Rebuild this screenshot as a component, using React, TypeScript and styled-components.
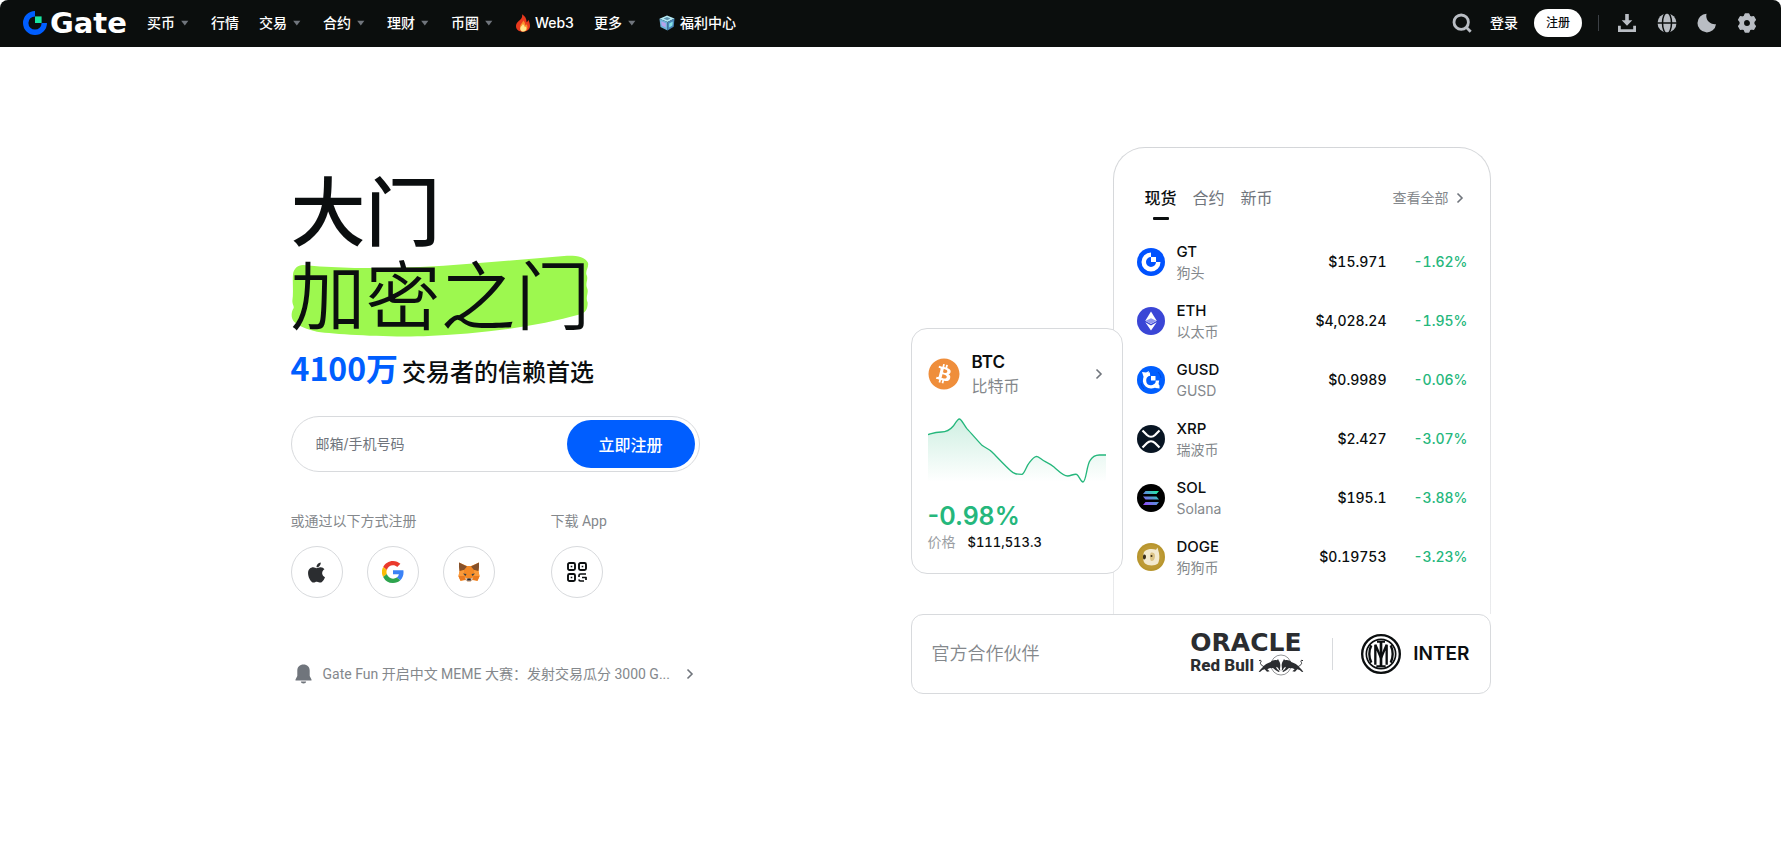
import React from 'react';
import styled, { createGlobalStyle } from 'styled-components';
import { FaApple, FaBitcoin } from 'react-icons/fa';

const Global = createGlobalStyle`
  *, *::before, *::after { box-sizing: border-box; }
  body { margin: 0; background: #fff; color: #0b0e0f; font-family: Inter, "Noto Sans CJK SC", sans-serif; }
  button, input { font: inherit; color: inherit; }
  button { border: 0; background: none; padding: 0; cursor: pointer; }
  a { color: inherit; text-decoration: none; }
  h1, h2, p { margin: 0; padding: 0; }
  svg { display: block; flex: none; }
`;

/* ---------- header ---------- */
const Header = styled.header`
  display: flex;
  align-items: center;
  justify-content: space-between;
  height: 47px;
  padding: 0 22px 1px;
  background: #0b0e0d;
  border-radius: 8px 8px 0 0;
  color: #fff;
  font-size: 14px;
  font-weight: 500;
  line-height: 20px;
`;
const Group = styled.div<{ $gap: number }>`
  display: flex;
  align-items: center;
  gap: ${p => p.$gap}px;
`;
const Logo = styled.a`
  display: flex;
  align-items: center;
  gap: 2px;
  font-family: "DejaVu Sans", sans-serif;
  font-size: 29px;
  font-weight: 700;
  line-height: 32px;
`;
const Nav = styled.nav`
  display: flex;
  align-items: center;
  gap: 20px;
`;
const NavLink = styled.a`
  display: flex;
  align-items: center;
  gap: 4px;
  white-space: nowrap;
`;
const SignUp = styled.button`
  width: 48px;
  height: 28px;
  border-radius: 14px;
  background: #fff;
  color: #0b0e0f;
  font-size: 12px;
  font-weight: 500;
`;
const Rule = styled.span<{ $h: number; $color: string }>`
  width: 1px;
  height: ${p => p.$h}px;
  background: ${p => p.$color};
`;
const IconButton = styled.button`
  display: grid;
  place-items: center;
  width: 24px;
  height: 24px;
  color: #b9bdc3;
`;

/* ---------- hero ---------- */
const Hero = styled.main`
  display: flex;
  justify-content: space-between;
  align-items: flex-start;
  max-width: 1200px;
  margin: 0 auto;
  padding: 100px 0 64px;
`;
const Intro = styled.section`
  width: 409px;
  padding-top: 24px;
`;
const Title = styled.h1`
  font-size: 75px;
  line-height: 84px;
  font-weight: 500;
  white-space: nowrap;
`;
const Marked = styled.span`
  display: block;
  position: relative;
  width: max-content;
  font-weight: 350;
  z-index: 0;
`;
const Marker = styled.svg`
  position: absolute;
  left: 0;
  top: 0;
  z-index: -1;
`;
const Tagline = styled.p`
  display: flex;
  align-items: baseline;
  gap: 4px;
  margin-top: 10px;
  font-size: 24px;
  line-height: 36px;
  font-weight: 500;
  white-space: nowrap;
`;
const Count = styled.strong`
  color: #005eff;
  font-size: 32px;
  font-weight: 700;
  font-family: "Noto Sans CJK SC", sans-serif;
`;
const SignForm = styled.form`
  display: flex;
  align-items: center;
  height: 56px;
  margin-top: 25px;
  padding: 0 4px 0 24px;
  border: 1px solid #d8dadd;
  border-radius: 28px;
`;
const Account = styled.input`
  flex: 1;
  min-width: 0;
  border: 0;
  outline: 0;
  padding: 0;
  background: none;
  font-size: 14px;
  line-height: 20px;
  &::placeholder { color: #70757c; opacity: 1; }
`;
const Submit = styled.button`
  width: 128px;
  height: 48px;
  border-radius: 24px;
  background: #005eff;
  color: #fff;
  font-size: 16px;
  font-weight: 500;
`;
const Ways = styled.div`
  display: flex;
  gap: 56px;
  margin-top: 39px;
`;
const WayLabel = styled.p`
  font-family: Roboto, "Noto Sans CJK SC", sans-serif;
  font-size: 14px;
  line-height: 20px;
  color: #84888c;
  margin-bottom: 15px;
`;
const Round = styled.button`
  display: grid;
  place-items: center;
  width: 52px;
  height: 52px;
  border: 1px solid #d8dadd;
  border-radius: 50%;
`;
const News = styled.a`
  display: flex;
  align-items: center;
  justify-content: space-between;
  margin-top: 64px;
  padding: 0 3px 0 4px;
  color: #70757c;
`;
const NewsText = styled.span`
  font-family: Roboto, "Noto Sans CJK SC", sans-serif;
  font-size: 14px;
  line-height: 24px;
  white-space: nowrap;
  color: #84888c;
`;

/* ---------- market ---------- */
const Market = styled.section`
  width: 580px;
`;
const Boards = styled.div`
  display: grid;
  grid-template-columns: 202px 1fr;
`;
const BtcCard = styled.a`
  position: relative;
  z-index: 1;
  align-self: end;
  width: 212px;
  height: 246px;
  margin-bottom: 40px;
  padding: 21px 16px 0;
  border: 1px solid #d8dadd;
  border-radius: 16px;
  background: #fff;
`;
const BtcHead = styled.div`
  display: flex;
  align-items: center;
  gap: 12px;
`;
const BtcNames = styled.div`
  flex: 1;
  font-size: 16px;
  line-height: 24px;
  color: #84888c;
  strong { display: block; color: #0b0e0f; font-size: 17px; font-weight: 600; }
`;
const Chart = styled.svg`
  width: 100%;
  height: auto;
  margin-top: 18px;
`;
const Change = styled.p`
  margin-top: 17px;
  font-size: 25px;
  line-height: 32px;
  font-weight: 600;
  color: #25b77c;
`;
const Price = styled.p`
  display: flex;
  gap: 12px;
  font-size: 14px;
  line-height: 20px;
  color: #9a9ea3;
  b { color: #0b0e0f; font-size: 13px; font-weight: 500; font-variant-numeric: tabular-nums; }
`;
const Panel = styled.div`
  height: 467px;
  padding: 38px 22px 0 23px;
  border: 1px solid transparent;
  border-bottom: 0;
  border-radius: 32px 32px 0 0;
  background:
    linear-gradient(#fff, #fff) padding-box,
    linear-gradient(#d4d6d9, #eaebed) border-box;
`;
const PanelHead = styled.div`
  display: flex;
  justify-content: space-between;
  align-items: flex-start;
  padding: 0 1px 0 8px;
`;
const Tab = styled.button<{ $on?: boolean }>`
  display: flex;
  flex-direction: column;
  align-items: center;
  gap: 7px;
  font-size: 16px;
  line-height: 24px;
  font-weight: ${p => (p.$on ? 500 : 400)};
  color: ${p => (p.$on ? '#0b0e0f' : '#70757c')};
  &::after {
    content: "";
    width: 16px;
    height: 3px;
    border-radius: 1px;
    background: ${p => (p.$on ? '#0b0e0f' : 'transparent')};
  }
`;
const More = styled.a`
  display: flex;
  align-items: center;
  gap: 4px;
  font-size: 14px;
  line-height: 24px;
  color: #84888c;
`;
const Table = styled.table`
  width: 100%;
  margin-top: 12px;
  border-collapse: collapse;
  td { height: 59px; padding: 0; text-align: right; font-size: 14px; font-weight: 500; font-variant-numeric: tabular-nums; }
`;
const Coin = styled.span`
  display: flex;
  align-items: center;
  gap: 12px;
  text-align: left;
`;
const CoinNames = styled.span`
  font-size: 14px;
  line-height: 21px;
  font-weight: 400;
  color: #84888c;
  b { display: block; color: #0b0e0f; font-size: 15px; font-weight: 500; }
`;
const Rate = styled.span`
  display: block;
  width: 81px;
  margin-left: auto;
  color: #25b77c;
`;
const Partners = styled.div`
  display: flex;
  align-items: center;
  height: 80px;
  padding: 0 20px;
  border: 1px solid #d8dadd;
  border-radius: 12px;
  background: #fff;
`;
const PartnerLabel = styled.h2`
  flex: 1;
  font-size: 18px;
  line-height: 28px;
  font-weight: 350;
  color: #84888c;
`;
const RacingLogo = styled.div`
  width: 114px;
  color: #2b2d30;
  margin-right: 28px;
`;
const Oracle = styled.div`
  font-family: "DejaVu Sans", sans-serif;
  font-size: 25px;
  font-weight: 700;
  line-height: 22px;
`;
const RedBull = styled.div`
  display: flex;
  align-items: center;
  justify-content: space-between;
  font-family: Roboto, sans-serif;
  font-size: 17px;
  line-height: 20px;
  font-weight: 800;
  white-space: nowrap;
`;
const InterLogo = styled.div`
  display: flex;
  align-items: center;
  gap: 12px;
  margin-left: 28px;
  font-size: 19px;
  line-height: 28px;
  font-weight: 600;
`;

/* ---------- drawings ---------- */
const Caret = () => (
  <svg width="12" height="12" viewBox="0 0 12 12"><path d="M2.2 3.7h7.2L5.8 8.4z" fill="#70757c" /></svg>
);
const Chevron = ({ color = '#70757c' }: { color?: string }) => (
  <svg width="14" height="14" viewBox="0 0 14 14" fill="none" stroke={color} strokeWidth="1.6">
    <path d="M4.5 2.5 9 7l-4.5 4.5" />
  </svg>
);
const GateMark = () => (
  <svg width="26" height="26" viewBox="0 0 26 26">
    <path d="M13 1a12 12 0 1 0 12 12h-5.400a6.600 6.600 0 1 1-6.600-6.600z" fill="#005eff" />
    <path d="M13 6.400h6.600V13H13z" fill="#17e6a1" />
  </svg>
);
const Flame = () => (
  <svg width="16" height="18" viewBox="0 0 16 18">
    <path d="M7 .3c.6 2.500-.2 3.800-1.600 5.300C3.700 7.300 1 9 1 12.200 1 15.500 4 17.700 8 17.700s7-2.300 7-5.700c0-2.600-1-4.600-1.700-6.200-.3 1.300-.8 2-1.700 2.500C11.700 5 10 1.800 7 .3z" fill="#e8391d" />
    <path d="M8 6.500c.3 1.800-2.800 3.300-2.800 6.500 0 2.500 1.500 4.500 3.300 4.500s4-1.600 4-4.300c0-1.500-.6-2.300-1-2.900-.3.700-.7 1-1.200 1.200C10.300 9.500 9.700 7.600 8 6.500z" fill="#f9902b" />
    <path d="M7.800 10c.1 1.200-2.600 2.300-2.600 4.700 0 1.700 1.300 2.900 3 2.900s3.200-1.100 3.200-3c0-.9-.4-1.600-.7-2-.3.500-.6.600-.9.700-.2-1.300-.8-2.500-2-3.300z" fill="#ffe58a" />
  </svg>
);
const Cube = () => (
  <svg width="18" height="16" viewBox="0 0 18 16">
    <path d="m9 .5 7.500 3L9.500 7 1.500 3.700z" fill="#b7ecf6" />
    <path d="M1.500 3.700l8 3.300v8.500L2.500 12z" fill="#6fb4da" />
    <path d="m9.500 7 7-3.500-.8 8.300-6.200 3.700z" fill="#4a86b8" />
    <path d="m5.500 3.600 3.500-1.500 3.500 1.300-3.300 1.800z" fill="#5f93ae" />
    <path d="M3.200 6.300 7.800 8.300v4.200l-4-2z" fill="#b8a3ec" />
    <path d="m11.200 8.600 3.600-2-.4 3.900-3.200 2z" fill="#86e3e8" />
  </svg>
);
const SearchIcon = () => (
  <svg width="20" height="20" viewBox="0 0 20 20" fill="none" stroke="currentColor" strokeWidth="2.800">
    <circle cx="9.200" cy="9.200" r="7.200" /><path d="m14 14 4.700 4.700" />
  </svg>
);
const DownloadIcon = () => (
  <svg width="20" height="20" viewBox="0 0 20 20" fill="currentColor">
    <path d="M8.200 1h3.600v6.200h3.500L10 12.800 4.700 7.200h3.500z" />
    <path d="M1 12.800h2.800v3.400h12.400v-3.400H19V19H1z" />
  </svg>
);
const GlobeIcon = () => (
  <svg width="20" height="20" viewBox="0 0 20 20">
    <circle cx="10" cy="10" r="9.500" fill="currentColor" />
    <g fill="none" stroke="#0b0e0d" strokeWidth="1.500">
      <path d="M0 10h20" /><ellipse cx="10" cy="10" rx="4.500" ry="10.500" />
    </g>
  </svg>
);
const MoonIcon = () => (
  <svg width="20" height="20" viewBox="0 0 20 20">
    <path d="M9.500.8A8.500 8.500 0 0 0 19 11.200 9.300 9.300 0 1 1 9.500.8z" fill="currentColor" />
  </svg>
);
const GearIcon = () => (
  <svg width="20" height="20" viewBox="0 0 20 20">
    <path fillRule="evenodd" fill="currentColor" stroke="currentColor" strokeWidth="1.500" strokeLinejoin="round"
      d="M8.300 1h3.400l.9 2.300 1.500.9 2.500-.4 1.700 3-1.600 1.900v2.600l1.600 1.900-1.700 3-2.500-.4-1.500.9-.9 2.300H8.300l-.9-2.300-1.500-.9-2.500.4-1.700-3 1.600-1.900V8.700L1.700 6.800l1.700-3 2.500.4 1.500-.9zM10 6.300a3.700 3.700 0 1 0 0 7.400 3.700 3.700 0 0 0 0-7.400z" />
  </svg>
);
const BellIcon = () => (
  <svg width="17" height="20" viewBox="0 0 17 20" fill="currentColor">
    <path d="M8.500.5C4.800.5 2.300 3 2.300 6.500v5.500L.5 15.500v1h16v-1L14.700 12V6.500c0-3.500-2.500-6-6.200-6z" />
    <path d="M5.800 17.600h5.400a2.700 2 0 0 1-5.400 0z" />
  </svg>
);
const GoogleIcon = () => (
  <svg width="22" height="22" viewBox="0 0 48 48">
    <path fill="#ea3a2c" d="M24 9.500c3.500 0 6.700 1.200 9.200 3.600l6.900-6.900C35.900 2.400 30.500 0 24 0 14.600 0 6.500 5.400 2.600 13.200l8 6.200C12.400 13.700 17.700 9.500 24 9.500z" />
    <path fill="#3b82f6" d="M47 24.600c0-1.600-.2-3.100-.4-4.600H24v9h12.900a11 11 0 0 1-4.800 7.200l7.700 6c4.500-4.200 7.200-10.400 7.200-17.600z" />
    <path fill="#fbbc05" d="M10.500 28.600a14.500 14.500 0 0 1 0-9.200l-8-6.200a24 24 0 0 0 0 21.600z" />
    <path fill="#2da44e" d="M24 48c6.500 0 11.900-2.100 15.900-5.800l-7.700-6A14.400 14.400 0 0 1 24 38.500c-6.300 0-11.600-4.200-13.500-9.900l-8 6.200A24 24 0 0 0 24 48z" />
  </svg>
);
const FoxIcon = () => (
  <svg width="22" height="20" viewBox="0 0 44 40">
    <path d="M2 1 18 8h8L42 1l-1 16 2 12-4 9-10-2-4 3h-6l-4-3-10 2-4-9 2-12z" fill="#f58a26" />
    <path d="M2 1 18 9l-6 7-9 2-1-8zM42 1 26 9l6 7 9 2 1-8z" fill="#85512b" />
    <path d="M12 16 3 19l-2 9h11zM32 16l9 3 2 9H32z" fill="#fb9a3a" />
    <path d="m5 37 10-2-3-7H1zM39 37l-10-2 3-7h11z" fill="#e97a20" />
    <path d="m10 23 7 1-2 4zM34 23l-7 1 2 4z" fill="#35424d" />
    <path d="m14 31 5 2h6l5-2-2 6-4 2.500h-4L16 37z" fill="#d5bfb2" />
    <path d="M19 33h6l1 4h-8z" fill="#1c242c" />
  </svg>
);
const QrIcon = () => (
  <svg width="20" height="20" viewBox="0 0 20 20" fill="none" stroke="#0b0e0f" strokeWidth="1.900">
    <rect x="1" y="1" width="7" height="7" rx="1.500" /><rect x="12" y="1" width="7" height="7" rx="1.500" />
    <rect x="1" y="12" width="7" height="7" rx="1.500" />
    <path d="M19 12h-5.500a1.500 1.500 0 0 0-1.500 1.500V15M12 17.500a1.500 1.500 0 0 0 1.500 1.500H17M15 15.500h4.500M19 15v3" strokeWidth="1.700" />
    <path d="M3.700 4.500h1.600M14.700 4.500h1.600M3.700 15.500h1.600" strokeWidth="1.600" />
  </svg>
);
const Bulls = () => (
  <svg width="46" height="22" viewBox="0 0 138 66">
    <circle cx="69" cy="33" r="30" fill="none" stroke="currentColor" strokeWidth="1.500" />
    {[undefined, 'matrix(-1 0 0 1 138 0)'].map((t, i) => (
      <g key={i} transform={t}>
        <path fill="none" stroke="currentColor" strokeWidth="3" d="M3 20c6-3 8 1 5 5-3 5 3 9 10 13" />
        <path fill="currentColor"
          d="M14 40c6-8 14-13 24-16 5-5 12-7 19-5l3-4 3 6c3 4 4 9 4 14l-1 9 1 6-4-3-3-6-6-3 3 7 8 7-3 2-10-6-7-6-11 1-6 3 7 6-8 1-7-7-7 2-7 6-4-1 6-7z" />
      </g>
    ))}
  </svg>
);
const InterCrest = () => (
  <svg width="40" height="40" viewBox="0 0 120 120" fill="none" stroke="#0b0e0f">
    <circle cx="60" cy="60" r="56.500" strokeWidth="7" />
    <circle cx="60" cy="60" r="44" strokeWidth="5" />
    <path strokeWidth="8" d="M60 22v76" />
    <path strokeWidth="6" d="M48 23h24M46 97h28" />
    <path strokeWidth="7" d="M43 92V32l17 40 17-40v60" strokeLinejoin="bevel" />
    <path strokeWidth="7" d="M31 34c-8 15-8 37 0 52M89 34c8 15 8 37 0 52" />
  </svg>
);

const Disc = ({ fill, children }: { fill: string; children: React.ReactNode }) => (
  <svg width="28" height="28" viewBox="0 0 28 28"><circle cx="14" cy="14" r="14" fill={fill} />{children}</svg>
);
const coinIcons: Record<string, React.ReactNode> = {
  GT: (
    <Disc fill="#0052ff">
      <path d="M14 4.500a9.500 9.500 0 1 0 9.500 9.500H19a5 5 0 1 1-5-5z" fill="#fff" /><path d="M14 9h5v5h-5z" fill="#fff" />
    </Disc>
  ),
  ETH: (
    <Disc fill="#3a46d6">
      <path d="m14 4.500 5.700 9.300L14 17.100l-5.700-3.300z" fill="#fff" />
      <path d="m8.300 15.200 5.700 3.300 5.700-3.300L14 23.500z" fill="#fff" />
      <path d="m8.600 13.700 5.400-2.500 5.400 2.500L14 16.800z" fill="#8f97ee" />
    </Disc>
  ),
  GUSD: (
    <Disc fill="#005eff">
      <path d="M13 8a6.500 6.500 0 1 0 7.500 6.500" fill="none" stroke="#fff" strokeWidth="3.400" />
      <path d="M14 10h4.500v4.500H14z" fill="#fff" />
      <path d="m5 6 4 .5L12 5l-1 5-4 2zM22.500 22.500l-4-.5-2.500-3 4-3 2.500 3.500z" fill="#fff" />
      <path d="M21 6a10 10 0 0 1 3 6M7 23a10 10 0 0 1-3-6" stroke="#0047d6" fill="none" />
    </Disc>
  ),
  XRP: (
    <Disc fill="#081523">
      <path d="M5.500 5.500 10 10c2.300 2.200 5.700 2.200 8 0l4.500-4.500M5.500 22.500 10 18c2.300-2.200 5.700-2.200 8 0l4.500 4.500" fill="none" stroke="#fff" strokeWidth="2.200" />
    </Disc>
  ),
  SOL: (
    <Disc fill="#000">
      <defs>
        <linearGradient id="sol" x1="0" y1="1" x2="1" y2="0">
          <stop offset="0" stopColor="#9945ff" /><stop offset=".5" stopColor="#5b8fd8" /><stop offset="1" stopColor="#19fb9b" />
        </linearGradient>
      </defs>
      <path fill="url(#sol)" d="M8.500 7H22l-2.500 3H6zM6 12.500h13.500l2.500 3H8.500zM8.500 18H22l-2.500 3H6z" />
    </Disc>
  ),
  DOGE: (
    <Disc fill="#b8962e">
      <circle cx="14" cy="14" r="12" fill="#bd9a35" />
      <path d="M7 9c1-1 2-2 4-2.500 3-.8 6-.5 8 .3l1.500-2.300L22 10c.8 4 .3 8-1 10.500-3 2.500-10 2.500-13 0-2-2-2.500-7-1-11.500z" fill="#f3ead0" />
      <path d="M14 9.500c2-.5 4 .5 4 3.500s-1.500 5-3.500 5S12.500 10.500 14 9.500z" fill="#dcc486" />
      <path d="M6.500 12c1-1 2.500 0 2.500 1.800s-1 2.700-2 2.700-1.500-3-.5-4.500z" fill="#3a2f1d" />
      <circle cx="14.500" cy="13" r="1" fill="#3a2f1d" />
    </Disc>
  ),
};

const nav: { label: string; caret?: boolean; icon?: React.ReactNode }[] = [
  { label: '买币', caret: true },
  { label: '行情' },
  { label: '交易', caret: true },
  { label: '合约', caret: true },
  { label: '理财', caret: true },
  { label: '币圈', caret: true },
  { label: 'Web3', icon: <Flame /> },
  { label: '更多', caret: true },
  { label: '福利中心', icon: <Cube /> },
];
const coins = [
  ['GT', '狗头', '$15.971', '-1.62%'],
  ['ETH', '以太币', '$4,028.24', '-1.95%'],
  ['GUSD', 'GUSD', '$0.9989', '-0.06%'],
  ['XRP', '瑞波币', '$2.427', '-3.07%'],
  ['SOL', 'Solana', '$195.1', '-3.88%'],
  ['DOGE', '狗狗币', '$0.19753', '-3.23%'],
];
const line =
  'M84 344C100 339 106 336 124 336C142 336 150 330 160 318C168 306 173 297 178 297C184 297 190 312 200 325C214 340 232 361 246 376C256 384 266 386 276 396C292 412 318 440 332 452C342 462 350 463 366 463C374 460 378 440 388 428C396 417 402 409 410 409C418 410 424 419 436 425C448 431 454 435 462 441C476 453 490 468 503 468C514 467 522 461 530 463C538 468 542 486 549 486C558 486 560 436 570 422C578 408 586 405 598 405L618 405';

export default function App() {
  return (
    <>
      <Global />
      <Header>
        <Group $gap={20}>
          <Logo href="#"><GateMark />Gate</Logo>
          <Nav>
            {nav.map(n => (
              <NavLink href="#" key={n.label}>{n.icon}{n.label}{n.caret && <Caret />}</NavLink>
            ))}
          </Nav>
        </Group>
        <Group $gap={16}>
          <IconButton aria-label="搜索"><SearchIcon /></IconButton>
          <NavLink href="#">登录</NavLink>
          <SignUp>注册</SignUp>
          <Rule $h={16} $color="#3c4045" />
          <IconButton aria-label="下载"><DownloadIcon /></IconButton>
          <IconButton aria-label="语言"><GlobeIcon /></IconButton>
          <IconButton aria-label="主题"><MoonIcon /></IconButton>
          <IconButton aria-label="设置"><GearIcon /></IconButton>
        </Group>
      </Header>

      <Hero>
        <Intro>
          <Title>
            大门
            <Marked>
              <Marker width="298" height="82" viewBox="32 287 894 246" aria-hidden="true">
                <path fill="#9df84f" d="M38 345C40 328 52 317 68 317C180 328 300 328 420 323C580 315 720 300 860 289C890 288 915 293 923 310C926 325 916 330 918 345C926 360 914 370 920 385C927 400 914 412 922 430C922 450 915 460 900 465C760 505 600 523 430 531C310 533 170 525 110 517C80 510 55 500 42 488C32 478 32 462 38 450C44 442 36 438 36 425C40 400 36 370 38 345Z" />
              </Marker>
              加密之门
            </Marked>
          </Title>
          <Tagline><Count>4100万</Count>交易者的信赖首选</Tagline>
          <SignForm>
            <Account aria-label="邮箱/手机号码" placeholder="邮箱/手机号码" />
            <Submit type="button">立即注册</Submit>
          </SignForm>
          <Ways>
            <div>
              <WayLabel>或通过以下方式注册</WayLabel>
              <Group $gap={24}>
                <Round aria-label="Apple"><FaApple size={23} color="#2b2d30" /></Round>
                <Round aria-label="Google"><GoogleIcon /></Round>
                <Round aria-label="MetaMask"><FoxIcon /></Round>
              </Group>
            </div>
            <div>
              <WayLabel>下载 App</WayLabel>
              <Round aria-label="App"><QrIcon /></Round>
            </div>
          </Ways>
          <News href="#">
            <Group $gap={11}>
              <BellIcon />
              <NewsText>Gate Fun 开启中文 MEME 大赛：发射交易瓜分 3000 G...</NewsText>
            </Group>
            <Chevron />
          </News>
        </Intro>

        <Market>
          <Boards>
            <BtcCard href="#">
              <BtcHead>
                <FaBitcoin size={32} color="#ef8e3b" />
                <BtcNames><strong>BTC</strong>比特币</BtcNames>
                <Chevron />
              </BtcHead>
              <Chart viewBox="84 288 534 201">
                <defs>
                  <linearGradient id="area" x1="0" y1="0" x2="0" y2="1">
                    <stop offset="0" stopColor="#25b77c" stopOpacity=".22" />
                    <stop offset="1" stopColor="#25b77c" stopOpacity="0" />
                  </linearGradient>
                </defs>
                <path d={`${line}V486H84Z`} fill="url(#area)" />
                <path d={line} fill="none" stroke="#25b77c" strokeWidth="4" />
              </Chart>
              <Change>-0.98%</Change>
              <Price>价格<b>$111,513.3</b></Price>
            </BtcCard>
            <Panel>
              <PanelHead>
                <Group $gap={16}>
                  <Tab $on>现货</Tab><Tab>合约</Tab><Tab>新币</Tab>
                </Group>
                <More href="#">查看全部<Chevron /></More>
              </PanelHead>
              <Table>
                <tbody>
                  {coins.map(([sym, name, price, rate]) => (
                    <tr key={sym}>
                      <td><Coin>{coinIcons[sym]}<CoinNames><b>{sym}</b>{name}</CoinNames></Coin></td>
                      <td>{price}</td>
                      <td width="81"><Rate>{rate}</Rate></td>
                    </tr>
                  ))}
                </tbody>
              </Table>
            </Panel>
          </Boards>
          <Partners>
            <PartnerLabel>官方合作伙伴</PartnerLabel>
            <RacingLogo>
              <Oracle>ORACLE</Oracle>
              <RedBull>Red Bull<Bulls /></RedBull>
            </RacingLogo>
            <Rule $h={32} $color="#d8dadd" />
            <InterLogo><InterCrest />INTER</InterLogo>
          </Partners>
        </Market>
      </Hero>
    </>
  );
}
